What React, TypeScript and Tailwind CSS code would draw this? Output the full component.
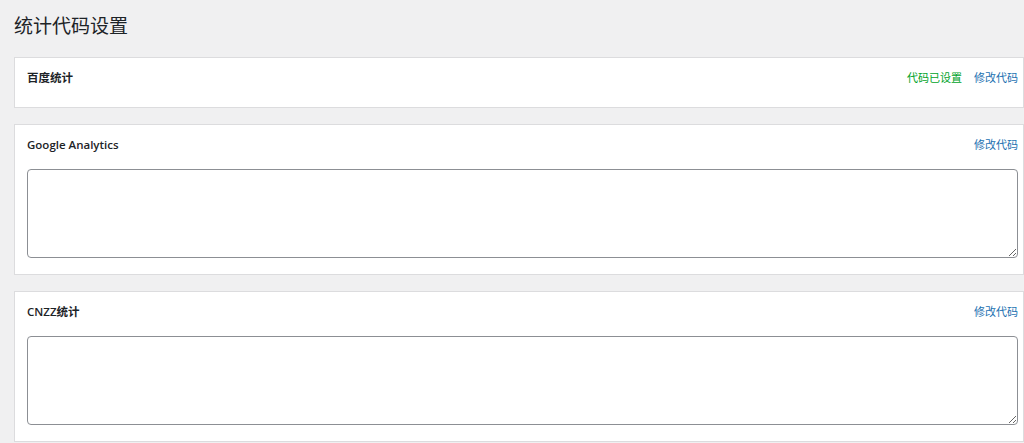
const sections = [
  { title: "百度统计", status: "代码已设置", hasBox: false },
  { title: "Google Analytics", status: null, hasBox: true },
  { title: "CNZZ统计", status: null, hasBox: true },
];

export default function App() {
  return (
    <div
      className="min-h-[443px] bg-[#f0f0f1] pl-[14px] text-[#1d2327]"
      style={{ fontFamily: '"Open Sans", "Noto Sans CJK SC", sans-serif' }}
    >
      <h1 className="pt-[14px] text-[19px] leading-[24px] font-normal">统计代码设置</h1>
      <div className="mt-[19px] flex flex-col gap-4">
        {sections.map((s) => (
          <div
            key={s.title}
            className="border border-[#dcdcde] bg-white pl-[12px] pr-[5px] pt-[13px]"
            style={{ paddingBottom: s.hasBox ? 16 : 22 }}
          >
            <div className="flex h-[14px] items-center justify-between">
              <span className="text-[11.5px] font-semibold">{s.title}</span>
              <div className="flex items-center gap-3 text-[11px]">
                {s.status && <span className="text-[#00a32a]">{s.status}</span>}
                <a href="#" className="text-[#2271b1]">修改代码</a>
              </div>
            </div>
            {s.hasBox && (
              <textarea className="mt-[17px] block h-[89px] w-full rounded-[4px] border border-[#8c8f94] bg-white" />
            )}
          </div>
        ))}
      </div>
    </div>
  );
}
